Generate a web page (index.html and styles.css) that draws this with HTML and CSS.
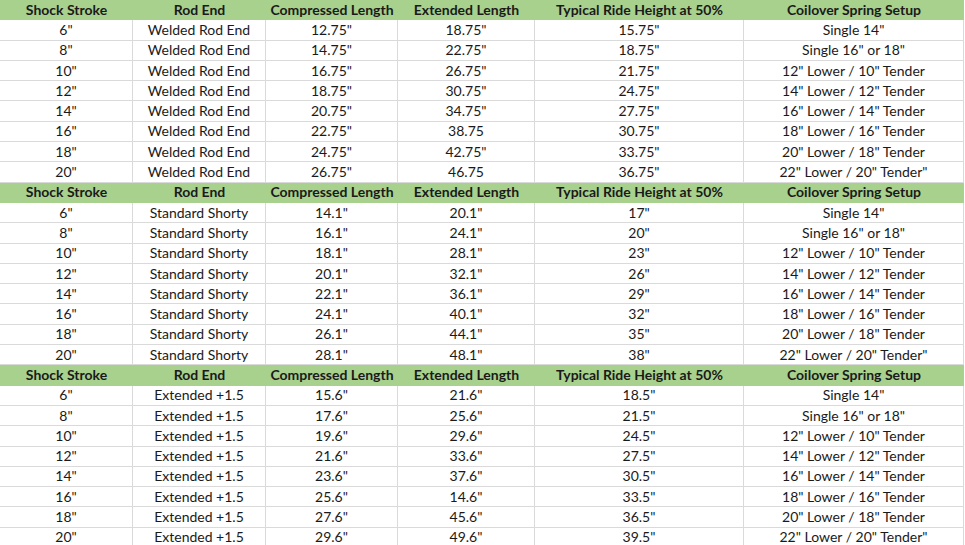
FILE: index.html
```html
<!DOCTYPE html>
<html>
<head>
<meta charset="utf-8">
<link rel="stylesheet" href="styles.css">
</head>
<body>
<div class="sheet">
  <div class="row head"><div>Shock Stroke</div><div>Rod End</div><div>Compressed Length</div><div>Extended Length</div><div>Typical Ride Height at 50%</div><div>Coilover Spring Setup</div></div>
  <div class="row"><div>6"</div><div>Welded Rod End</div><div>12.75"</div><div>18.75"</div><div>15.75"</div><div>Single 14"</div></div>
  <div class="row"><div>8"</div><div>Welded Rod End</div><div>14.75"</div><div>22.75"</div><div>18.75"</div><div>Single 16" or 18"</div></div>
  <div class="row"><div>10"</div><div>Welded Rod End</div><div>16.75"</div><div>26.75"</div><div>21.75"</div><div>12" Lower / 10" Tender</div></div>
  <div class="row"><div>12"</div><div>Welded Rod End</div><div>18.75"</div><div>30.75"</div><div>24.75"</div><div>14" Lower / 12" Tender</div></div>
  <div class="row"><div>14"</div><div>Welded Rod End</div><div>20.75"</div><div>34.75"</div><div>27.75"</div><div>16" Lower / 14" Tender</div></div>
  <div class="row"><div>16"</div><div>Welded Rod End</div><div>22.75"</div><div>38.75</div><div>30.75"</div><div>18" Lower / 16" Tender</div></div>
  <div class="row"><div>18"</div><div>Welded Rod End</div><div>24.75"</div><div>42.75"</div><div>33.75"</div><div>20" Lower / 18" Tender</div></div>
  <div class="row"><div>20"</div><div>Welded Rod End</div><div>26.75"</div><div>46.75</div><div>36.75"</div><div>22" Lower / 20" Tender"</div></div>
  <div class="row head"><div>Shock Stroke</div><div>Rod End</div><div>Compressed Length</div><div>Extended Length</div><div>Typical Ride Height at 50%</div><div>Coilover Spring Setup</div></div>
  <div class="row"><div>6"</div><div>Standard Shorty</div><div>14.1"</div><div>20.1"</div><div>17"</div><div>Single 14"</div></div>
  <div class="row"><div>8"</div><div>Standard Shorty</div><div>16.1"</div><div>24.1"</div><div>20"</div><div>Single 16" or 18"</div></div>
  <div class="row"><div>10"</div><div>Standard Shorty</div><div>18.1"</div><div>28.1"</div><div>23"</div><div>12" Lower / 10" Tender</div></div>
  <div class="row"><div>12"</div><div>Standard Shorty</div><div>20.1"</div><div>32.1"</div><div>26"</div><div>14" Lower / 12" Tender</div></div>
  <div class="row"><div>14"</div><div>Standard Shorty</div><div>22.1"</div><div>36.1"</div><div>29"</div><div>16" Lower / 14" Tender</div></div>
  <div class="row"><div>16"</div><div>Standard Shorty</div><div>24.1"</div><div>40.1"</div><div>32"</div><div>18" Lower / 16" Tender</div></div>
  <div class="row"><div>18"</div><div>Standard Shorty</div><div>26.1"</div><div>44.1"</div><div>35"</div><div>20" Lower / 18" Tender</div></div>
  <div class="row"><div>20"</div><div>Standard Shorty</div><div>28.1"</div><div>48.1"</div><div>38"</div><div>22" Lower / 20" Tender"</div></div>
  <div class="row head"><div>Shock Stroke</div><div>Rod End</div><div>Compressed Length</div><div>Extended Length</div><div>Typical Ride Height at 50%</div><div>Coilover Spring Setup</div></div>
  <div class="row"><div>6"</div><div>Extended +1.5</div><div>15.6"</div><div>21.6"</div><div>18.5"</div><div>Single 14"</div></div>
  <div class="row"><div>8"</div><div>Extended +1.5</div><div>17.6"</div><div>25.6"</div><div>21.5"</div><div>Single 16" or 18"</div></div>
  <div class="row"><div>10"</div><div>Extended +1.5</div><div>19.6"</div><div>29.6"</div><div>24.5"</div><div>12" Lower / 10" Tender</div></div>
  <div class="row"><div>12"</div><div>Extended +1.5</div><div>21.6"</div><div>33.6"</div><div>27.5"</div><div>14" Lower / 12" Tender</div></div>
  <div class="row"><div>14"</div><div>Extended +1.5</div><div>23.6"</div><div>37.6"</div><div>30.5"</div><div>16" Lower / 14" Tender</div></div>
  <div class="row"><div>16"</div><div>Extended +1.5</div><div>25.6"</div><div>14.6"</div><div>33.5"</div><div>18" Lower / 16" Tender</div></div>
  <div class="row"><div>18"</div><div>Extended +1.5</div><div>27.6"</div><div>45.6"</div><div>36.5"</div><div>20" Lower / 18" Tender</div></div>
  <div class="row"><div>20"</div><div>Extended +1.5</div><div>29.6"</div><div>49.6"</div><div>39.5"</div><div>22" Lower / 20" Tender"</div></div>
</div>
</body>
</html>
```
FILE: styles.css
```css
html, body {
  margin: 0;
  padding: 0;
  background: #ffffff;
}
.sheet {
  width: 964px;
  font-family: Lato, "Open Sans", sans-serif;
  font-size: 14px;
  color: #1a1a1a;
}
.row {
  display: grid;
  grid-template-columns: 133px 133px 132px 137px 209px 220px;
  height: 20.3px;
  box-sizing: border-box;
  border-bottom: 1px solid #dadada;
}
.row > div {
  display: flex;
  align-items: center;
  justify-content: center;
  border-right: 1px solid #dadada;
  white-space: nowrap;
  line-height: 1;
}
.row.head {
  background: #a9d18e;
  border-bottom: 1px solid #a9d18e;
  font-weight: bold;
  color: #1a1a1a;
}
.row.head > div {
  border-right: none;
}
```
